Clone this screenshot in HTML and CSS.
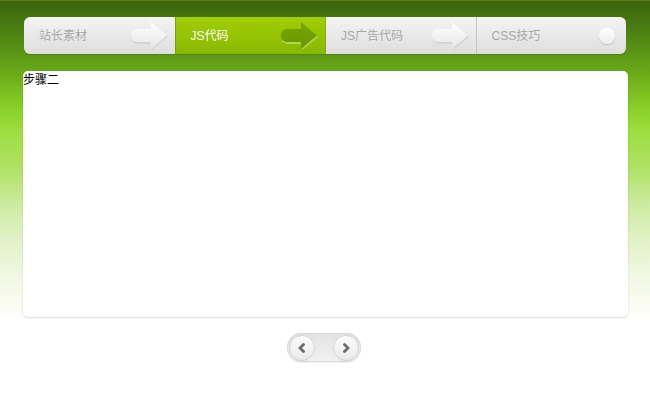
FILE: index.html
```html
<!DOCTYPE html>
<html lang="zh-CN">
<head>
<meta charset="utf-8">
<title>步骤</title>
<link rel="stylesheet" href="styles.css">
</head>
<body>
<svg width="0" height="0" class="defs">
  <defs>
    <linearGradient id="gLight" x1="0" y1="0" x2="0" y2="1">
      <stop offset="0" stop-color="#ffffff"/>
      <stop offset="1" stop-color="#e6e6e6"/>
    </linearGradient>
    <linearGradient id="gDark" x1="0" y1="0" x2="0" y2="1">
      <stop offset="0" stop-color="#78a800"/>
      <stop offset="1" stop-color="#6a9600"/>
    </linearGradient>
  </defs>
</svg>
<div class="stage">
  <ul class="tabs">
    <li class="tab">
      <span class="label">站长素材</span>
      <svg class="arrow" viewBox="0 0 38 30" width="38" height="30"><path class="shadow" d="M7,9 H21 V3 L37,16 L21,29 V23 H7 A7,7 0 0 1 7,9 Z"/><path class="light" d="M6,8 H20 V1 L36,14.5 L20,28 V21 H6 A6.5,6.5 0 0 1 6,8 Z"/></svg>
    </li>
    <li class="tab active">
      <span class="label">JS代码</span>
      <svg class="arrow" viewBox="0 0 38 30" width="38" height="30"><path class="shadow-d" d="M7,9 H21 V3 L37,16 L21,29 V23 H7 A7,7 0 0 1 7,9 Z"/><path class="dark" d="M6,8 H20 V1 L36,14.5 L20,28 V21 H6 A6.5,6.5 0 0 1 6,8 Z"/></svg>
    </li>
    <li class="tab">
      <span class="label">JS广告代码</span>
      <svg class="arrow" viewBox="0 0 38 30" width="38" height="30"><path class="shadow" d="M7,9 H21 V3 L37,16 L21,29 V23 H7 A7,7 0 0 1 7,9 Z"/><path class="light" d="M6,8 H20 V1 L36,14.5 L20,28 V21 H6 A6.5,6.5 0 0 1 6,8 Z"/></svg>
    </li>
    <li class="tab last">
      <span class="label">CSS技巧</span>
      <span class="dot"></span>
    </li>
  </ul>
  <div class="panel">步骤二</div>
</div>
<div class="pager">
  <button class="pbtn" type="button" aria-label="上一步"><svg viewBox="0 0 10 10" width="10" height="10"><path d="M6.5,1.5 L3,5 L6.5,8.5" /></svg></button>
  <button class="pbtn" type="button" aria-label="下一步"><svg viewBox="0 0 10 10" width="10" height="10"><path d="M3.5,1.5 L7,5 L3.5,8.5" /></svg></button>
</div>
</body>
</html>
```
FILE: styles.css
```css
html, body {
  margin: 0;
  padding: 0;
  background: #ffffff;
}
body {
  width: 650px;
  height: 400px;
  overflow: hidden;
  font-family: "Liberation Sans", "Noto Sans CJK SC", sans-serif;
  font-size: 12px;
}
.defs {
  position: absolute;
  width: 0;
  height: 0;
}
.stage {
  height: 318px;
  padding: 17px 22px 0 23px;
  box-sizing: border-box;
  border-top: 1px solid #5b7d22;
  background: linear-gradient(to bottom,
    #3b650c 0px,
    #4b8012 30px,
    #68a818 70px,
    #88cd25 105px,
    #9ddf3e 130px,
    #aee162 165px,
    #cdeca2 205px,
    #e3f2c8 240px,
    #f3f8e6 280px,
    #fcfdf8 310px,
    #ffffff 318px);
}
.tabs {
  list-style: none;
  margin: -1px 0 0 1px;
  padding: 0;
  width: 602px;
  height: 37px;
  display: flex;
  border-radius: 6px;
  overflow: hidden;
  box-shadow: 0 1px 1px rgba(40, 80, 0, 0.25);
}
.tab {
  flex: 0 0 25%;
  display: flex;
  align-items: center;
  justify-content: space-between;
  padding: 0 6px 0 15px;
  background: linear-gradient(to bottom, #f4f4f4, #dedede);
  border-left: 1px solid #c4c4c4;
  box-sizing: border-box;
}
.tab:first-child {
  border-left: none;
}
.tab.last {
  padding-right: 11px;
}
.tab .label {
  color: #a8a8a8;
  line-height: 1;
}
.tab.active {
  background: linear-gradient(to bottom, #a0cf02, #88b800);
  border-left: 1px solid #7a9e10;
}
.tab.active + .tab {
  border-left: 1px solid #86a820;
}
.tab.active .label {
  color: #ffffff;
}
.arrow {
  display: block;
  margin-top: 1px;
}
.arrow .light {
  fill: url(#gLight);
}
.arrow .shadow {
  fill: #cfcfcf;
  opacity: 0.7;
}
.arrow .dark {
  fill: url(#gDark);
}
.arrow .shadow-d {
  fill: #b7d86a;
  opacity: 0.8;
}
.dot {
  width: 16px;
  height: 16px;
  border-radius: 50%;
  background: linear-gradient(to bottom, #ffffff, #ededed);
  box-shadow: 0 1px 1px rgba(0, 0, 0, 0.18);
}
.panel {
  margin-top: 17px;
  width: 605px;
  height: 246px;
  background: #ffffff;
  border-radius: 5px;
  box-shadow: 0 1px 2px rgba(0, 0, 0, 0.15);
  color: #000000;
  font-family: "Noto Sans CJK SC", sans-serif;
  font-size: 12px;
  line-height: 14px;
  padding-top: 1px;
  box-sizing: border-box;
}
.pager {
  display: flex;
  justify-content: space-between;
  align-items: center;
  width: 74px;
  height: 29px;
  margin: 15px 0 0 287px;
  padding: 0 2px;
  box-sizing: border-box;
  border-radius: 15px;
  background: linear-gradient(to bottom, #e2e2e2, #f2f2f2);
  box-shadow: inset 0 0 0 1px #d8d8d8, 0 1px 1px rgba(0, 0, 0, 0.06);
}
.pbtn {
  width: 26px;
  height: 26px;
  padding: 0;
  border: 1px solid #d4d4d4;
  border-radius: 50%;
  background: linear-gradient(to bottom, #fdfdfd, #e9e9e9);
  display: flex;
  align-items: center;
  justify-content: center;
  box-sizing: border-box;
}
.pbtn path {
  fill: none;
  stroke: #6b6b6b;
  stroke-width: 2.8;
  stroke-linecap: round;
  stroke-linejoin: round;
}
```
